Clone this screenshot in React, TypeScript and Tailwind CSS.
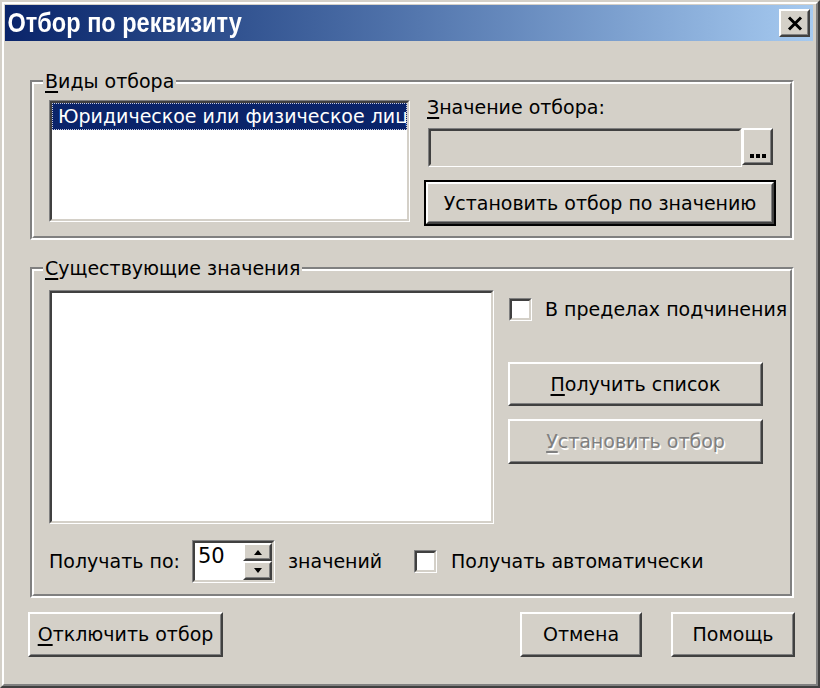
import React from "react";

type P = { children?: React.ReactNode; className?: string; inner?: string };

function Raised({ children, className = "", inner = "" }: P) {
  return (
    <div className={`border-2 border-t-white border-l-white border-r-[#404040] border-b-[#404040] bg-[#d4d0c8] ${className}`}>
      <div className={`w-full h-full border border-t-[#d4d0c8] border-l-[#d4d0c8] border-r-[#808080] border-b-[#808080] flex items-center justify-center ${inner}`}>
        {children}
      </div>
    </div>
  );
}

function Sunken({ children, className = "", inner = "" }: P) {
  return (
    <div className={`border border-t-[#808080] border-l-[#808080] border-r-white border-b-white ${className}`}>
      <div className={`w-full h-full border-2 border-t-[#404040] border-l-[#404040] border-r-[#d4d0c8] border-b-[#d4d0c8] ${inner}`}>
        {children}
      </div>
    </div>
  );
}

function Group({ label, className = "", children }: { label: React.ReactNode; className?: string; children?: React.ReactNode }) {
  return (
    <div className={`relative border-2 border-t-[#808080] border-l-[#808080] border-r-white border-b-white ${className}`}>
      <div className="w-full h-full border-2 border-t-white border-l-white border-r-[#808080] border-b-[#808080]">
        {children}
      </div>
      <span className="absolute left-[11px] -top-[13px] bg-[#d4d0c8] px-[2px] leading-[24px] h-[24px] whitespace-nowrap">
        {label}
      </span>
    </div>
  );
}

const U = ({ children }: { children: React.ReactNode }) => (
  <span className="underline decoration-[2px] underline-offset-[3px]">{children}</span>
);

function Check({ className = "" }: { className?: string }) {
  return <Sunken className={`w-[23px] h-[23px] shrink-0 ${className}`} inner="bg-white" />;
}

export default function App() {
  return (
    <div className="w-[820px] h-[688px] bg-[#d4d0c8] text-black font-['DejaVu_Sans',sans-serif] text-[19px] border-2 border-t-[#d4d0c8] border-l-[#d4d0c8] border-r-[#404040] border-b-[#404040]">
      <div className="w-full h-full flex flex-col border-2 border-t-white border-l-white border-r-[#808080] border-b-[#808080]">
        {/* Title bar */}
        <div className="ml-[1px] mr-[3px] mt-[1px] h-[36px] shrink-0 flex items-center justify-between bg-linear-to-r from-[#0a246a] to-[#a6caf0]">
          <span className="pl-[3px] origin-left scale-x-[0.84] text-white font-bold text-[28px] leading-[36px] font-['Liberation_Sans',Arial,sans-serif] whitespace-nowrap">
            Отбор по реквизиту
          </span>
          <Raised className="w-[31px] h-[28px] mr-[3px]">
            <svg width="16" height="15" viewBox="0 0 16 15">
              <path d="M2 1.5 L14 13.5 M14 1.5 L2 13.5" stroke="#000" strokeWidth="3" />
            </svg>
          </Raised>
        </div>

        {/* Group 1 */}
        <Group
          className="ml-[26px] mr-[22px] mt-[39px] h-[160px] shrink-0"
          label={<><U>В</U>иды отбора</>}
        >
          <div className="flex items-start pl-[15px] pt-[13px] pr-[14px]">
            <Sunken className="w-[361px] h-[122px] mt-[3px] shrink-0" inner="bg-white overflow-hidden">
              <div className="h-[27px] bg-[#0a246a] border border-dotted border-[#c8cce0] text-white leading-[25px] pl-[5px] whitespace-nowrap overflow-hidden">
                Юридическое или физическое лицо
              </div>
            </Sunken>
            <div className="ml-[14px] w-[352px] flex flex-col">
              <div className="h-[20px] leading-[20px] pl-[3px] whitespace-nowrap">
                <U>З</U>начение отбора:
              </div>
              <div className="mt-[11px] ml-[4px] flex items-start">
                <Sunken className="w-[314px] h-[39px]" inner="bg-[#d4d0c8]" />
                <Raised className="w-[31px] h-[37px]" inner="!items-end pb-[4px] gap-[2px]">
                  <span className="w-[4px] h-[4px] bg-black" />
                  <span className="w-[4px] h-[4px] bg-black" />
                  <span className="w-[4px] h-[4px] bg-black" />
                </Raised>
              </div>
              <div className="mt-[13px] w-[352px] h-[46px] border-2 border-black">
                <Raised className="w-full h-full">
                  <span className="whitespace-nowrap">Установить отбор по значению</span>
                </Raised>
              </div>
            </div>
          </div>
        </Group>

        {/* Group 2 */}
        <Group
          className="ml-[26px] mr-[22px] mt-[27px] h-[331px] shrink-0"
          label={<><U>С</U>уществующие значения</>}
        >
          <div className="flex flex-col pl-[15px] pt-[19px]">
            <div className="flex items-start">
              <Sunken className="w-[445px] h-[234px] shrink-0" inner="bg-white" />
              <div className="ml-[14px] flex flex-col">
                <div className="mt-[7px] ml-[1px] flex items-center">
                  <Check />
                  <span className="ml-[13px] whitespace-nowrap leading-[24px]">В пределах подчинения</span>
                </div>
                <Raised className="mt-[41px] w-[255px] h-[44px]">
                  <span className="whitespace-nowrap"><U>П</U>олучить список</span>
                </Raised>
                <Raised className="mt-[13px] w-[255px] h-[45px]">
                  <span className="whitespace-nowrap text-[#808080] [text-shadow:1.5px_1.5px_0_#ffffff]">
                    <U>У</U>становить отбор
                  </span>
                </Raised>
              </div>
            </div>
            <div className="mt-[16px] h-[43px] flex items-center">
              <span className="w-[143px] whitespace-nowrap">Получать по:</span>
              <Sunken className="w-[83px] h-[43px] shrink-0" inner="bg-white flex justify-between">
                <span className="pl-[3px] leading-[26px] text-[21px]">50</span>
                <div className="w-[29px] flex flex-col">
                  <Raised className="h-[18px] w-[29px]">
                    <svg width="8" height="5" viewBox="0 0 8 5"><path d="M4 0 L8 5 L0 5 Z" fill="#000" /></svg>
                  </Raised>
                  <Raised className="h-[19px] w-[29px]">
                    <svg width="8" height="5" viewBox="0 0 8 5"><path d="M0 0 L8 0 L4 5 Z" fill="#000" /></svg>
                  </Raised>
                </div>
              </Sunken>
              <span className="ml-[13px] w-[126px] whitespace-nowrap">значений</span>
              <Check />
              <span className="ml-[14px] whitespace-nowrap">Получать автоматически</span>
            </div>
          </div>
        </Group>

        {/* Bottom buttons */}
        <div className="mt-[14px] ml-[24px] mr-[21px] h-[45px] flex items-center">
          <Raised className="w-[195px] h-[45px]">
            <span className="whitespace-nowrap"><U>О</U>тключить отбор</span>
          </Raised>
          <div className="flex-1" />
          <Raised className="w-[122px] h-[45px]">
            <span>Отмена</span>
          </Raised>
          <Raised className="ml-[29px] w-[124px] h-[45px]">
            <span>Помощь</span>
          </Raised>
        </div>
      </div>
    </div>
  );
}
